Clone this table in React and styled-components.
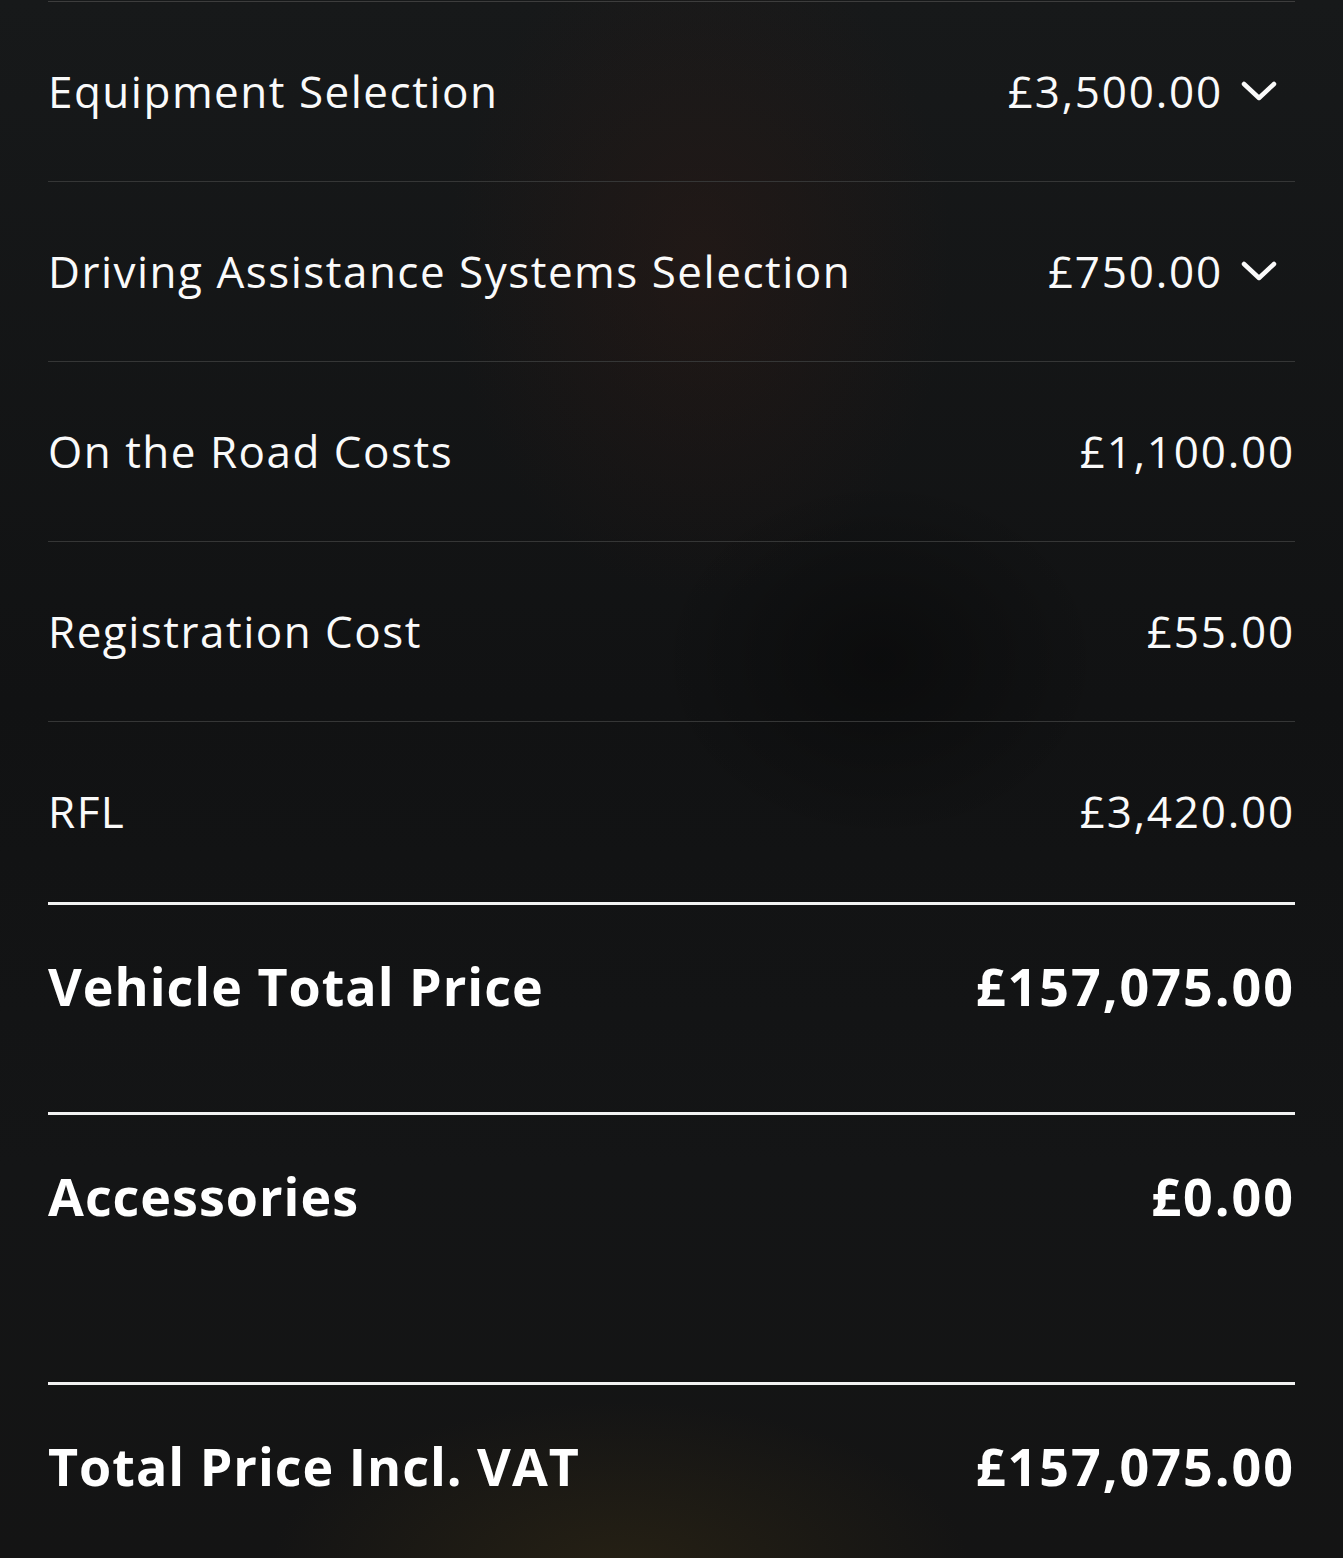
import React from "react";
import styled, { createGlobalStyle } from "styled-components";

const Global = createGlobalStyle`
  html, body { margin: 0; padding: 0; background: #131415; }
  body { font-family: "Open Sans", "Liberation Sans", sans-serif; color: #fff; }
`;

const Page = styled.div`
  width: 1343px;
  height: 1558px;
  overflow: hidden;
  box-sizing: border-box;
  padding: 1px 48px 0;
  background:
    radial-gradient(ellipse 360px 480px at 700px 260px, rgba(55, 28, 20, 0.35), transparent 70%),
    radial-gradient(ellipse 500px 240px at 620px 1570px, rgba(70, 55, 20, 0.35), transparent 70%),
    radial-gradient(ellipse 320px 260px at 880px 660px, rgba(0, 0, 0, 0.35), transparent 70%),
    linear-gradient(180deg, #17191a 0%, #111213 45%, #141516 75%, #141414 100%);
`;

const List = styled.div`
  display: flex;
  flex-direction: column;
  border-top: 1px solid #3d3d3d;
`;

const Row = styled.div`
  height: 180px;
  box-sizing: border-box;
  padding-bottom: 2px;
  display: flex;
  align-items: center;
  justify-content: space-between;
  border-bottom: 1px solid #353636;
  &:last-child { border-bottom: none; }
`;

const Label = styled.span`
  font-size: 44px;
  font-weight: 400;
  letter-spacing: 1.5px;
  color: #fafafa;
`;

const Value = styled.span`
  display: flex;
  align-items: center;
  gap: 18px;
  padding-right: ${(p) => (p.$chevron ? 16 : 0)}px;
  font-size: 44px;
  font-weight: 400;
  letter-spacing: 1.8px;
  color: #fafafa;
`;

const Summary = styled.div`
  border-top: 3px solid #f2f2f2;
  height: ${(p) => p.$h}px;
  box-sizing: border-box;
  padding-top: 46px;
  display: flex;
  align-items: flex-start;
  justify-content: space-between;
`;

const BoldText = styled.span`
  font-size: 52px;
  font-weight: 700;
  letter-spacing: ${(p) => (p.$num ? 2 : 1)}px;
  line-height: 70px;
  color: #fff;
`;

const Chevron = () => (
  <svg width="38" height="26" viewBox="0 0 38 26" fill="none">
    <path d="M3 6 L18 20 L33 6" stroke="#fafafa" strokeWidth="4.5" strokeLinecap="round" strokeLinejoin="round" />
  </svg>
);

const rows = [
  { label: "Equipment Selection", value: "£3,500.00", chevron: true },
  { label: "Driving Assistance Systems Selection", value: "£750.00", chevron: true },
  { label: "On the Road Costs", value: "£1,100.00" },
  { label: "Registration Cost", value: "£55.00" },
  { label: "RFL", value: "£3,420.00" },
];

const summaries = [
  { label: "Vehicle Total Price", value: "£157,075.00", h: 210 },
  { label: "Accessories", value: "£0.00", h: 270 },
  { label: "Total Price Incl. VAT", value: "£157,075.00", h: 200 },
];

export default function App() {
  return (
    <>
      <Global />
      <Page>
        <List>
          {rows.map((r) => (
            <Row key={r.label}>
              <Label>{r.label}</Label>
              <Value $chevron={r.chevron}>
                {r.value}
                {r.chevron && <Chevron />}
              </Value>
            </Row>
          ))}
        </List>
        {summaries.map((s) => (
          <Summary key={s.label} $h={s.h}>
            <BoldText>{s.label}</BoldText>
            <BoldText $num>{s.value}</BoldText>
          </Summary>
        ))}
      </Page>
    </>
  );
}
